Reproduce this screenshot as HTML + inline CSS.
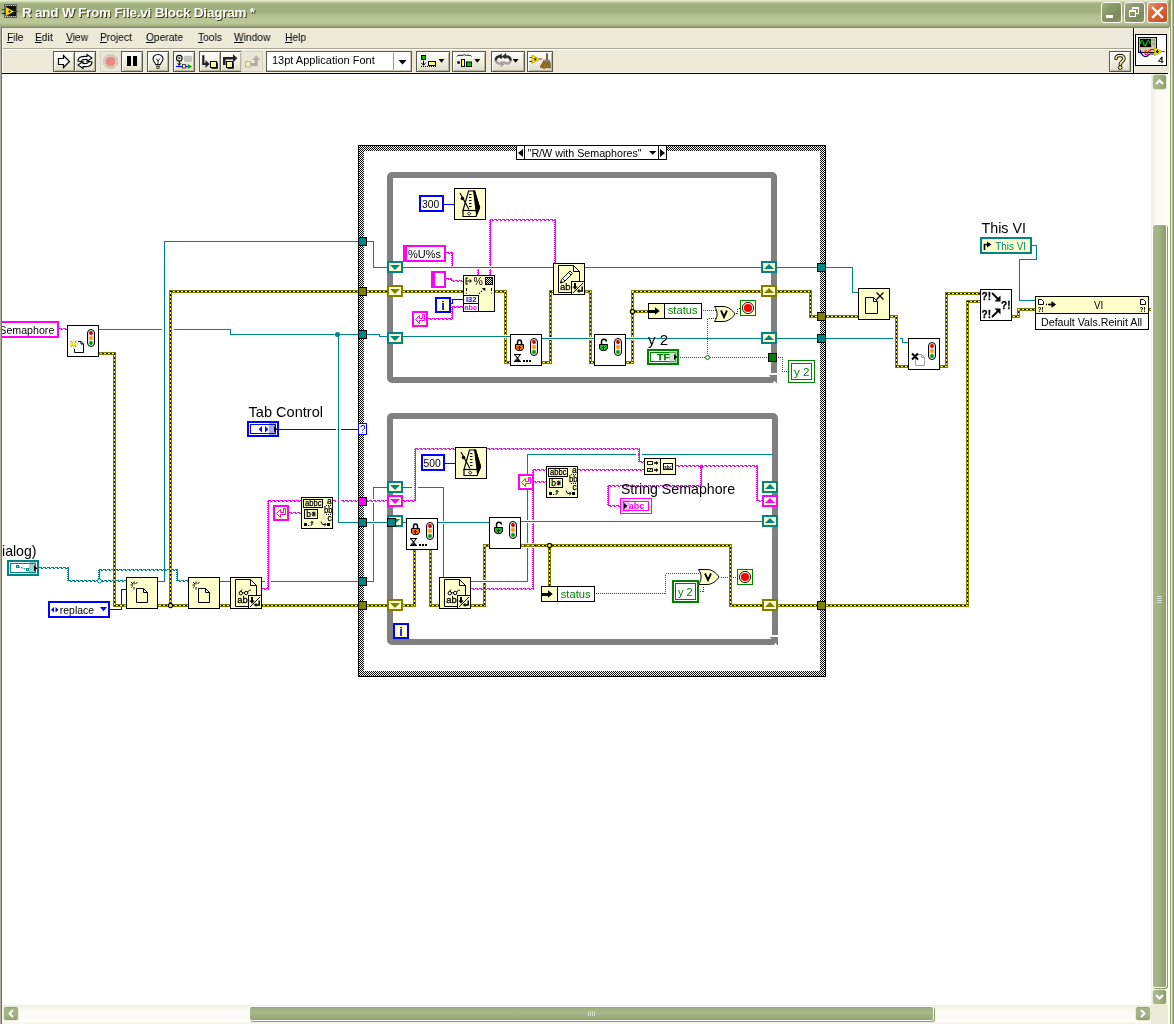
<!DOCTYPE html>
<html lang="en"><head><meta charset="utf-8"><title>R and W From File.vi Block Diagram *</title>
<style>
html,body{margin:0;padding:0;background:#fff;}
body{width:1174px;height:1024px;overflow:hidden;position:relative;font-family:"Liberation Sans",sans-serif;font-size:11px;color:#000;}
#win{position:absolute;left:0;top:0;width:1174px;height:1024px;overflow:hidden;background:#fff;}
.abs{position:absolute;}
svg{position:absolute;left:0;top:0;overflow:hidden;}
svg text{font-family:"Liberation Sans",sans-serif;}
#dg,#title .t,#menubar span,.fb span,#viicon{will-change:transform;}

#title{position:absolute;left:0;top:0;width:1170px;height:26px;
 background:linear-gradient(to bottom,#e9f0d0 0px,#d3dcb2 1.5px,#adb989 3px,#a2af7e 5px,#a2af7e 12px,#b6c292 16px,#bbc796 23px,#adb888 25px,#9ba678 26px);}
#title .t{position:absolute;left:22px;top:5px;font:bold 13.5px "Liberation Sans",sans-serif;color:#fff;
 text-shadow:1px 1px 0 #3c3d14;white-space:nowrap;letter-spacing:-0.22px;}
.cap{position:absolute;top:2px;width:19px;height:19px;border:1px solid #fff;border-radius:3px;
 background:linear-gradient(135deg,#a1ad82 0%,#8b9a6a 35%,#7c8c5c 75%,#8a996a 100%);}
#bclose{background:linear-gradient(135deg,#e59a80 0%,#dc6b44 30%,#d4592c 70%,#bf481c 100%);}
#menubar{position:absolute;left:0;top:28px;width:1170px;height:21px;background:#ece9d8;}
#menubar span{position:absolute;top:3px;font-size:11px;white-space:nowrap;transform-origin:0 0;transform:scaleX(0.93);}
#menubar u{text-decoration:underline;}
#toolbar{position:absolute;left:0;top:50px;width:1133px;height:23px;background:#ece9d8;}
.tb{position:absolute;top:51px;height:19px;border:1px solid #5a5a4c;
 background:linear-gradient(to bottom,#fffffb 0%,#f3f1e4 45%,#e0dccb 100%);box-shadow:inset 1px 1px 0 #fff,inset -1px -1px 0 #b9b5a0;}
.tbd{position:absolute;top:51px;height:19px;border:1px solid #d6d2c0;background:#e9e6d6;}
</style></head>
<body>
<div id="win">
<svg id="dg" width="1174" height="1024" viewBox="0 0 1174 1024" shape-rendering="crispEdges">
<rect x="0" y="74" width="1174" height="950" fill="#fff"/>
<defs><pattern id="chk" width="2" height="2" patternUnits="userSpaceOnUse"><rect width="2" height="2" fill="#fff"/><rect x="0" y="0" width="1" height="1" fill="#000"/><rect x="1" y="1" width="1" height="1" fill="#000"/></pattern></defs>
<path d="M358 145 H826 V677 H358 Z M364 151 V671 H820 V151 Z" fill="#000" fill-rule="evenodd"/>
<path d="M359 146 H825 V676 H359 Z M364 151 V671 H820 V151 Z" fill="url(#chk)" fill-rule="evenodd"/>
<rect x="390" y="175" width="384" height="205" rx="2" ry="2" fill="none" stroke="#808080" stroke-width="6" shape-rendering="auto"/>
<rect x="767" y="371" width="10" height="12" fill="#fff"/>
<rect x="771" y="369" width="6" height="4" fill="#808080"/>
<rect x="765" y="377" width="12" height="6" fill="#808080"/>
<path d="M769 375 H777 V378 H771 Z" fill="#808080" shape-rendering="auto"/>
<path d="M772.8 383 L774.5 380.8 L776.2 383 Z" fill="#fff" shape-rendering="auto"/>
<rect x="390" y="416" width="385" height="226" rx="2" ry="2" fill="none" stroke="#808080" stroke-width="6" shape-rendering="auto"/>
<rect x="768" y="633" width="10" height="12" fill="#fff"/>
<rect x="772" y="631" width="6" height="4" fill="#808080"/>
<rect x="766" y="639" width="12" height="6" fill="#808080"/>
<path d="M770 637 H778 V640 H772 Z" fill="#808080" shape-rendering="auto"/>
<path d="M773.8 645 L775.5 642.8 L777.2 645 Z" fill="#fff" shape-rendering="auto"/>
<rect x="516.5" y="145.5" width="150.0" height="14.0" fill="#fff" stroke="#000" stroke-width="1"/>
<rect x="516.5" y="145.5" width="8.0" height="14.0" fill="#fff" stroke="#000" stroke-width="1"/>
<rect x="658.5" y="145.5" width="8.0" height="14.0" fill="#fff" stroke="#000" stroke-width="1"/>
<path d="M523 149 V157 L518 153 Z" fill="#000" shape-rendering="auto"/>
<path d="M660 149 V157 L665 153 Z" fill="#000" shape-rendering="auto"/>
<path d="M649 151 H656.4 L652.7 154.8 Z" fill="#000" shape-rendering="auto"/>
<text x="527.6" y="156.5" font-size="11" fill="#000" textLength="114.0" lengthAdjust="spacingAndGlyphs">&quot;R/W with Semaphores&quot;</text>
<path d="M99.5 329.5 L230.5 329.5 L230.5 334.5 L358.5 334.5" fill="none" stroke="#008484" stroke-width="1" stroke-linecap="square"/>
<path d="M338.5 334.5 L338.5 522.5 L358.5 522.5" fill="none" stroke="#008484" stroke-width="1" stroke-linecap="square"/>
<circle cx="337.5" cy="334.5" r="2.5" fill="#008484" shape-rendering="auto"/>
<path d="M158.5 581.5 L164.5 581.5 L164.5 241.5 L358.5 241.5" fill="none" stroke="#008484" stroke-width="1" stroke-linecap="square"/>
<path d="M220.5 581.5 L230.5 581.5" fill="none" stroke="#008484" stroke-width="1" stroke-linecap="square"/>
<path d="M262.5 581.5 L358.5 581.5" fill="none" stroke="#008484" stroke-width="1" stroke-linecap="square"/>
<path d="M366.5 241.5 L373.5 241.5 L373.5 267.5 L553.5 267.5" fill="none" stroke="#008484" stroke-width="1" stroke-linecap="square"/>
<path d="M585.5 267.5 L852.5 267.5 L852.5 292.5 L858.5 292.5" fill="none" stroke="#008484" stroke-width="1" stroke-linecap="square"/>
<path d="M366.5 334.5 L379.5 334.5 L379.5 336.5 L510.5 336.5" fill="none" stroke="#008484" stroke-width="1" stroke-linecap="square"/>
<path d="M542.5 338.5 L902.5 338.5 L902.5 342.5 L908.5 342.5" fill="none" stroke="#008484" stroke-width="1" stroke-linecap="square"/>
<path d="M366.5 581.5 L373.5 581.5 L373.5 487.5 L443.5 487.5 L443.5 577.5" fill="none" stroke="#008484" stroke-width="1" stroke-linecap="square"/>
<path d="M366.5 522.5 L489.5 522.5" fill="none" stroke="#008484" stroke-width="1" stroke-linecap="square"/>
<path d="M521.5 521.5 L762.5 521.5" fill="none" stroke="#008484" stroke-width="1" stroke-linecap="square"/>
<path d="M471.5 581.5 L527.5 581.5 L527.5 454.5 L772.5 454.5" fill="none" stroke="#008484" stroke-width="1" stroke-linecap="square"/>
<path d="M1032.5 245.5 L1036.5 245.5 L1036.5 259.5 L1019.5 259.5 L1019.5 300.5 L1035.5 300.5" fill="none" stroke="#008484" stroke-width="1" stroke-linecap="square"/>
<path d="M279.5 429.5 L358.5 429.5" fill="none" stroke="#0000ff" stroke-width="1" stroke-linecap="square"/>
<path d="M444.5 204.5 L454.5 204.5" fill="none" stroke="#0000ff" stroke-width="1" stroke-linecap="square"/>
<path d="M451.5 303.5 L452.5 303.5 L452.5 299.5 L463.5 299.5" fill="none" stroke="#0000ff" stroke-width="1" stroke-linecap="square"/>
<path d="M445.5 463.5 L455.5 463.5" fill="none" stroke="#0000ff" stroke-width="1" stroke-linecap="square"/>
<path d="M110.5 609.5 L121.5 609.5 L121.5 589.5 L126.5 589.5" fill="none" stroke="#0000ff" stroke-width="1" stroke-linecap="square"/>
<path d="M39 567.5 H69" fill="none" stroke="#008484" stroke-width="1" stroke-dasharray="3 1"/>
<path d="M41 568.5 H69" fill="none" stroke="#008484" stroke-width="1" stroke-dasharray="2 2"/>
<path d="M68.5 567 V581" fill="none" stroke="#008484" stroke-width="1"/>
<path d="M67.5 568 V581" fill="none" stroke="#008484" stroke-width="1" stroke-dasharray="1 1"/>
<path d="M68 580.5 H127" fill="none" stroke="#008484" stroke-width="1" stroke-dasharray="3 1"/>
<path d="M70 581.5 H127" fill="none" stroke="#008484" stroke-width="1" stroke-dasharray="2 2"/>
<path d="M99.5 569 V581" fill="none" stroke="#008484" stroke-width="1"/>
<path d="M98.5 570 V581" fill="none" stroke="#008484" stroke-width="1" stroke-dasharray="1 1"/>
<path d="M99 569.5 H178" fill="none" stroke="#008484" stroke-width="1" stroke-dasharray="3 1"/>
<path d="M101 570.5 H178" fill="none" stroke="#008484" stroke-width="1" stroke-dasharray="2 2"/>
<path d="M177.5 569 V581" fill="none" stroke="#008484" stroke-width="1"/>
<path d="M176.5 570 V581" fill="none" stroke="#008484" stroke-width="1" stroke-dasharray="1 1"/>
<path d="M177 580.5 H189" fill="none" stroke="#008484" stroke-width="1" stroke-dasharray="3 1"/>
<path d="M179 581.5 H189" fill="none" stroke="#008484" stroke-width="1" stroke-dasharray="2 2"/>
<circle cx="99.5" cy="581" r="2" fill="#fff" stroke="#008484" stroke-width="1" shape-rendering="auto"/>
<path d="M59 328.5 H68" fill="none" stroke="#ff00ff" stroke-width="1" stroke-dasharray="3 1"/>
<path d="M61 329.5 H68" fill="none" stroke="#ff00ff" stroke-width="1" stroke-dasharray="2 2"/>
<path d="M262 588.5 H269" fill="none" stroke="#ff00ff" stroke-width="1" stroke-dasharray="3 1"/>
<path d="M264 589.5 H269" fill="none" stroke="#ff00ff" stroke-width="1" stroke-dasharray="2 2"/>
<path d="M268.5 500 V589" fill="none" stroke="#ff00ff" stroke-width="1"/>
<path d="M267.5 501 V589" fill="none" stroke="#ff00ff" stroke-width="1" stroke-dasharray="1 1"/>
<path d="M268 500.5 H302" fill="none" stroke="#ff00ff" stroke-width="1" stroke-dasharray="3 1"/>
<path d="M270 501.5 H302" fill="none" stroke="#ff00ff" stroke-width="1" stroke-dasharray="2 2"/>
<path d="M289 512.5 H302" fill="none" stroke="#ff00ff" stroke-width="1" stroke-dasharray="3 1"/>
<path d="M291 513.5 H302" fill="none" stroke="#ff00ff" stroke-width="1" stroke-dasharray="2 2"/>
<path d="M333 500.5 H388" fill="none" stroke="#ff00ff" stroke-width="1" stroke-dasharray="3 1"/>
<path d="M335 501.5 H388" fill="none" stroke="#ff00ff" stroke-width="1" stroke-dasharray="2 2"/>
<path d="M402 500.5 H416" fill="none" stroke="#ff00ff" stroke-width="1" stroke-dasharray="3 1"/>
<path d="M404 501.5 H416" fill="none" stroke="#ff00ff" stroke-width="1" stroke-dasharray="2 2"/>
<path d="M415.5 448 V501" fill="none" stroke="#ff00ff" stroke-width="1"/>
<path d="M414.5 449 V501" fill="none" stroke="#ff00ff" stroke-width="1" stroke-dasharray="1 1"/>
<path d="M415 448.5 H640" fill="none" stroke="#ff00ff" stroke-width="1" stroke-dasharray="3 1"/>
<path d="M417 449.5 H640" fill="none" stroke="#ff00ff" stroke-width="1" stroke-dasharray="2 2"/>
<path d="M639.5 448 V462" fill="none" stroke="#ff00ff" stroke-width="1"/>
<path d="M638.5 449 V462" fill="none" stroke="#ff00ff" stroke-width="1" stroke-dasharray="1 1"/>
<path d="M639 461.5 H645" fill="none" stroke="#ff00ff" stroke-width="1" stroke-dasharray="3 1"/>
<path d="M641 462.5 H645" fill="none" stroke="#ff00ff" stroke-width="1" stroke-dasharray="2 2"/>
<path d="M446 252.5 H453" fill="none" stroke="#ff00ff" stroke-width="1" stroke-dasharray="3 1"/>
<path d="M448 253.5 H453" fill="none" stroke="#ff00ff" stroke-width="1" stroke-dasharray="2 2"/>
<path d="M452.5 252 V266" fill="none" stroke="#ff00ff" stroke-width="1"/>
<path d="M451.5 253 V266" fill="none" stroke="#ff00ff" stroke-width="1" stroke-dasharray="1 1"/>
<path d="M446 278.5 H452" fill="none" stroke="#ff00ff" stroke-width="1" stroke-dasharray="3 1"/>
<path d="M448 279.5 H452" fill="none" stroke="#ff00ff" stroke-width="1" stroke-dasharray="2 2"/>
<path d="M451.5 278 V281" fill="none" stroke="#ff00ff" stroke-width="1"/>
<path d="M450.5 279 V281" fill="none" stroke="#ff00ff" stroke-width="1" stroke-dasharray="1 1"/>
<path d="M451 280.5 H464" fill="none" stroke="#ff00ff" stroke-width="1" stroke-dasharray="3 1"/>
<path d="M453 281.5 H464" fill="none" stroke="#ff00ff" stroke-width="1" stroke-dasharray="2 2"/>
<path d="M428 318.5 H453" fill="none" stroke="#ff00ff" stroke-width="1" stroke-dasharray="3 1"/>
<path d="M430 319.5 H453" fill="none" stroke="#ff00ff" stroke-width="1" stroke-dasharray="2 2"/>
<path d="M452.5 306 V319" fill="none" stroke="#ff00ff" stroke-width="1"/>
<path d="M451.5 307 V319" fill="none" stroke="#ff00ff" stroke-width="1" stroke-dasharray="1 1"/>
<path d="M452 306.5 H464" fill="none" stroke="#ff00ff" stroke-width="1" stroke-dasharray="3 1"/>
<path d="M454 307.5 H464" fill="none" stroke="#ff00ff" stroke-width="1" stroke-dasharray="2 2"/>
<path d="M478.5 269 V276" fill="none" stroke="#ff00ff" stroke-width="1"/>
<path d="M477.5 270 V276" fill="none" stroke="#ff00ff" stroke-width="1" stroke-dasharray="1 1"/>
<path d="M490.5 219 V276" fill="none" stroke="#ff00ff" stroke-width="1"/>
<path d="M489.5 220 V276" fill="none" stroke="#ff00ff" stroke-width="1" stroke-dasharray="1 1"/>
<path d="M490 219.5 H556" fill="none" stroke="#ff00ff" stroke-width="1" stroke-dasharray="3 1"/>
<path d="M492 220.5 H556" fill="none" stroke="#ff00ff" stroke-width="1" stroke-dasharray="2 2"/>
<path d="M555.5 219 V264" fill="none" stroke="#ff00ff" stroke-width="1"/>
<path d="M554.5 220 V264" fill="none" stroke="#ff00ff" stroke-width="1" stroke-dasharray="1 1"/>
<path d="M471 588.5 H534" fill="none" stroke="#ff00ff" stroke-width="1" stroke-dasharray="3 1"/>
<path d="M473 589.5 H534" fill="none" stroke="#ff00ff" stroke-width="1" stroke-dasharray="2 2"/>
<path d="M533.5 469 V589" fill="none" stroke="#ff00ff" stroke-width="1"/>
<path d="M532.5 470 V589" fill="none" stroke="#ff00ff" stroke-width="1" stroke-dasharray="1 1"/>
<path d="M533 469.5 H547" fill="none" stroke="#ff00ff" stroke-width="1" stroke-dasharray="3 1"/>
<path d="M535 470.5 H547" fill="none" stroke="#ff00ff" stroke-width="1" stroke-dasharray="2 2"/>
<path d="M533 481.5 H547" fill="none" stroke="#ff00ff" stroke-width="1" stroke-dasharray="3 1"/>
<path d="M535 482.5 H547" fill="none" stroke="#ff00ff" stroke-width="1" stroke-dasharray="2 2"/>
<path d="M578 469.5 H645" fill="none" stroke="#ff00ff" stroke-width="1" stroke-dasharray="3 1"/>
<path d="M580 470.5 H645" fill="none" stroke="#ff00ff" stroke-width="1" stroke-dasharray="2 2"/>
<path d="M676 465.5 H758" fill="none" stroke="#ff00ff" stroke-width="1" stroke-dasharray="3 1"/>
<path d="M678 466.5 H758" fill="none" stroke="#ff00ff" stroke-width="1" stroke-dasharray="2 2"/>
<path d="M757.5 465 V501" fill="none" stroke="#ff00ff" stroke-width="1"/>
<path d="M756.5 466 V501" fill="none" stroke="#ff00ff" stroke-width="1" stroke-dasharray="1 1"/>
<path d="M757 500.5 H763" fill="none" stroke="#ff00ff" stroke-width="1" stroke-dasharray="3 1"/>
<path d="M759 501.5 H763" fill="none" stroke="#ff00ff" stroke-width="1" stroke-dasharray="2 2"/>
<path d="M701.5 465 V486" fill="none" stroke="#ff00ff" stroke-width="1"/>
<path d="M700.5 466 V486" fill="none" stroke="#ff00ff" stroke-width="1" stroke-dasharray="1 1"/>
<path d="M608 485.5 H702" fill="none" stroke="#ff00ff" stroke-width="1" stroke-dasharray="3 1"/>
<path d="M610 486.5 H702" fill="none" stroke="#ff00ff" stroke-width="1" stroke-dasharray="2 2"/>
<path d="M608.5 485 V506" fill="none" stroke="#ff00ff" stroke-width="1"/>
<path d="M607.5 486 V506" fill="none" stroke="#ff00ff" stroke-width="1" stroke-dasharray="1 1"/>
<path d="M608 505.5 H621" fill="none" stroke="#ff00ff" stroke-width="1" stroke-dasharray="3 1"/>
<path d="M610 506.5 H621" fill="none" stroke="#ff00ff" stroke-width="1" stroke-dasharray="2 2"/>
<circle cx="701.5" cy="466.5" r="2.0" fill="#ff00ff" shape-rendering="auto"/>
<path d="M702.5 310.5 L715.5 310.5" fill="none" stroke="#008000" stroke-width="1" stroke-dasharray="1 1"/>
<path d="M735.5 313.5 L737.5 313.5 L737.5 308.5 L740.5 308.5" fill="none" stroke="#008000" stroke-width="1" stroke-dasharray="1 1"/>
<path d="M679.5 357.5 L768.5 357.5" fill="none" stroke="#008000" stroke-width="1" stroke-dasharray="1 1"/>
<path d="M707.5 357.5 L707.5 318.5 L715.5 318.5" fill="none" stroke="#008000" stroke-width="1" stroke-dasharray="1 1"/>
<circle cx="707.5" cy="357.5" r="2" fill="#fff" stroke="#008000" stroke-width="1" shape-rendering="auto"/>
<path d="M777.5 357.5 L782.5 357.5 L782.5 371.5 L788.5 371.5" fill="none" stroke="#008000" stroke-width="1" stroke-dasharray="1 1"/>
<path d="M595.5 593.5 L665.5 593.5 L665.5 573.5 L701.5 573.5" fill="none" stroke="#008000" stroke-width="1" stroke-dasharray="1 1"/>
<path d="M699.5 591.5 L703.5 591.5 L703.5 585.5" fill="none" stroke="#008000" stroke-width="1" stroke-dasharray="1 1"/>
<path d="M720.5 577.5 L737.5 577.5" fill="none" stroke="#008000" stroke-width="1" stroke-dasharray="1 1"/>
<path d="M99.5 353.5 L114.5 353.5 L114.5 605.5 L126.5 605.5" fill="none" stroke="#808000" stroke-width="3" stroke-linejoin="miter" stroke-linecap="square"/>
<path d="M99.5 353.5 L114.5 353.5 L114.5 605.5 L126.5 605.5" fill="none" stroke="#000" stroke-width="1"/>
<path d="M99.5 353.5 L114.5 353.5 L114.5 605.5 L126.5 605.5" fill="none" stroke="#ffff00" stroke-width="1" stroke-dasharray="2 2"/>
<path d="M158.5 605.5 L358.5 605.5" fill="none" stroke="#808000" stroke-width="3" stroke-linejoin="miter" stroke-linecap="square"/>
<path d="M158.5 605.5 L358.5 605.5" fill="none" stroke="#000" stroke-width="1"/>
<path d="M158.5 605.5 L358.5 605.5" fill="none" stroke="#ffff00" stroke-width="1" stroke-dasharray="2 2"/>
<path d="M170.5 605.5 L170.5 291.5 L358.5 291.5" fill="none" stroke="#808000" stroke-width="3" stroke-linejoin="miter" stroke-linecap="square"/>
<path d="M170.5 605.5 L170.5 291.5 L358.5 291.5" fill="none" stroke="#000" stroke-width="1"/>
<path d="M170.5 605.5 L170.5 291.5 L358.5 291.5" fill="none" stroke="#ffff00" stroke-width="1" stroke-dasharray="2 2"/>
<circle cx="170.5" cy="605.5" r="2.1" fill="#ffff00" stroke="#000" stroke-width="1.2" shape-rendering="auto"/>
<path d="M366.5 291.5 L463.5 291.5" fill="none" stroke="#808000" stroke-width="3" stroke-linejoin="miter" stroke-linecap="square"/>
<path d="M366.5 291.5 L463.5 291.5" fill="none" stroke="#000" stroke-width="1"/>
<path d="M366.5 291.5 L463.5 291.5" fill="none" stroke="#ffff00" stroke-width="1" stroke-dasharray="2 2"/>
<path d="M495.5 291.5 L505.5 291.5 L505.5 362.5 L510.5 362.5" fill="none" stroke="#808000" stroke-width="3" stroke-linejoin="miter" stroke-linecap="square"/>
<path d="M495.5 291.5 L505.5 291.5 L505.5 362.5 L510.5 362.5" fill="none" stroke="#000" stroke-width="1"/>
<path d="M495.5 291.5 L505.5 291.5 L505.5 362.5 L510.5 362.5" fill="none" stroke="#ffff00" stroke-width="1" stroke-dasharray="2 2"/>
<path d="M542.5 362.5 L550.5 362.5 L550.5 291.5 L553.5 291.5" fill="none" stroke="#808000" stroke-width="3" stroke-linejoin="miter" stroke-linecap="square"/>
<path d="M542.5 362.5 L550.5 362.5 L550.5 291.5 L553.5 291.5" fill="none" stroke="#000" stroke-width="1"/>
<path d="M542.5 362.5 L550.5 362.5 L550.5 291.5 L553.5 291.5" fill="none" stroke="#ffff00" stroke-width="1" stroke-dasharray="2 2"/>
<path d="M585.5 291.5 L590.5 291.5 L590.5 362.5 L594.5 362.5" fill="none" stroke="#808000" stroke-width="3" stroke-linejoin="miter" stroke-linecap="square"/>
<path d="M585.5 291.5 L590.5 291.5 L590.5 362.5 L594.5 362.5" fill="none" stroke="#000" stroke-width="1"/>
<path d="M585.5 291.5 L590.5 291.5 L590.5 362.5 L594.5 362.5" fill="none" stroke="#ffff00" stroke-width="1" stroke-dasharray="2 2"/>
<path d="M626.5 362.5 L632.5 362.5 L632.5 291.5 L810.5 291.5 L810.5 316.5 L858.5 316.5" fill="none" stroke="#808000" stroke-width="3" stroke-linejoin="miter" stroke-linecap="square"/>
<path d="M626.5 362.5 L632.5 362.5 L632.5 291.5 L810.5 291.5 L810.5 316.5 L858.5 316.5" fill="none" stroke="#000" stroke-width="1"/>
<path d="M626.5 362.5 L632.5 362.5 L632.5 291.5 L810.5 291.5 L810.5 316.5 L858.5 316.5" fill="none" stroke="#ffff00" stroke-width="1" stroke-dasharray="2 2"/>
<path d="M632.5 311.5 L648.5 311.5" fill="none" stroke="#808000" stroke-width="3" stroke-linejoin="miter" stroke-linecap="square"/>
<path d="M632.5 311.5 L648.5 311.5" fill="none" stroke="#000" stroke-width="1"/>
<path d="M632.5 311.5 L648.5 311.5" fill="none" stroke="#ffff00" stroke-width="1" stroke-dasharray="2 2"/>
<circle cx="632.5" cy="311.5" r="2.1" fill="#ffff00" stroke="#000" stroke-width="1.2" shape-rendering="auto"/>
<path d="M890.5 316.5 L896.5 316.5 L896.5 366.5 L908.5 366.5" fill="none" stroke="#808000" stroke-width="3" stroke-linejoin="miter" stroke-linecap="square"/>
<path d="M890.5 316.5 L896.5 316.5 L896.5 366.5 L908.5 366.5" fill="none" stroke="#000" stroke-width="1"/>
<path d="M890.5 316.5 L896.5 316.5 L896.5 366.5 L908.5 366.5" fill="none" stroke="#ffff00" stroke-width="1" stroke-dasharray="2 2"/>
<path d="M940.5 366.5 L946.5 366.5 L946.5 293.5 L980.5 293.5" fill="none" stroke="#808000" stroke-width="3" stroke-linejoin="miter" stroke-linecap="square"/>
<path d="M940.5 366.5 L946.5 366.5 L946.5 293.5 L980.5 293.5" fill="none" stroke="#000" stroke-width="1"/>
<path d="M940.5 366.5 L946.5 366.5 L946.5 293.5 L980.5 293.5" fill="none" stroke="#ffff00" stroke-width="1" stroke-dasharray="2 2"/>
<path d="M366.5 605.5 L414.5 605.5 L414.5 550.5" fill="none" stroke="#808000" stroke-width="3" stroke-linejoin="miter" stroke-linecap="square"/>
<path d="M366.5 605.5 L414.5 605.5 L414.5 550.5" fill="none" stroke="#000" stroke-width="1"/>
<path d="M366.5 605.5 L414.5 605.5 L414.5 550.5" fill="none" stroke="#ffff00" stroke-width="1" stroke-dasharray="2 2"/>
<path d="M430.5 550.5 L430.5 605.5 L439.5 605.5" fill="none" stroke="#808000" stroke-width="3" stroke-linejoin="miter" stroke-linecap="square"/>
<path d="M430.5 550.5 L430.5 605.5 L439.5 605.5" fill="none" stroke="#000" stroke-width="1"/>
<path d="M430.5 550.5 L430.5 605.5 L439.5 605.5" fill="none" stroke="#ffff00" stroke-width="1" stroke-dasharray="2 2"/>
<path d="M471.5 605.5 L484.5 605.5 L484.5 545.5 L489.5 545.5" fill="none" stroke="#808000" stroke-width="3" stroke-linejoin="miter" stroke-linecap="square"/>
<path d="M471.5 605.5 L484.5 605.5 L484.5 545.5 L489.5 545.5" fill="none" stroke="#000" stroke-width="1"/>
<path d="M471.5 605.5 L484.5 605.5 L484.5 545.5 L489.5 545.5" fill="none" stroke="#ffff00" stroke-width="1" stroke-dasharray="2 2"/>
<path d="M521.5 545.5 L730.5 545.5 L730.5 605.5 L967.5 605.5 L967.5 301.5 L980.5 301.5" fill="none" stroke="#808000" stroke-width="3" stroke-linejoin="miter" stroke-linecap="square"/>
<path d="M521.5 545.5 L730.5 545.5 L730.5 605.5 L967.5 605.5 L967.5 301.5 L980.5 301.5" fill="none" stroke="#000" stroke-width="1"/>
<path d="M521.5 545.5 L730.5 545.5 L730.5 605.5 L967.5 605.5 L967.5 301.5 L980.5 301.5" fill="none" stroke="#ffff00" stroke-width="1" stroke-dasharray="2 2"/>
<path d="M549.5 545.5 L549.5 587.5" fill="none" stroke="#808000" stroke-width="3" stroke-linejoin="miter" stroke-linecap="square"/>
<path d="M549.5 545.5 L549.5 587.5" fill="none" stroke="#000" stroke-width="1"/>
<path d="M549.5 545.5 L549.5 587.5" fill="none" stroke="#ffff00" stroke-width="1" stroke-dasharray="2 2"/>
<circle cx="549.5" cy="545.5" r="2.1" fill="#ffff00" stroke="#000" stroke-width="1.2" shape-rendering="auto"/>
<path d="M1012.5 316.5 L1018.5 316.5 L1018.5 309.5 L1035.5 309.5" fill="none" stroke="#808000" stroke-width="3" stroke-linejoin="miter" stroke-linecap="square"/>
<path d="M1012.5 316.5 L1018.5 316.5 L1018.5 309.5 L1035.5 309.5" fill="none" stroke="#000" stroke-width="1"/>
<path d="M1012.5 316.5 L1018.5 316.5 L1018.5 309.5 L1035.5 309.5" fill="none" stroke="#ffff00" stroke-width="1" stroke-dasharray="2 2"/>
<path d="M1149.5 309.5 L1152.5 309.5" fill="none" stroke="#808000" stroke-width="3" stroke-linejoin="miter" stroke-linecap="square"/>
<path d="M1149.5 309.5 L1152.5 309.5" fill="none" stroke="#000" stroke-width="1"/>
<path d="M1149.5 309.5 L1152.5 309.5" fill="none" stroke="#ffff00" stroke-width="1" stroke-dasharray="2 2"/>
<rect x="504" y="335" width="3" height="3" fill="#fff"/>
<rect x="504" y="336" width="3" height="1" fill="#008484"/>
<rect x="549" y="337" width="3" height="3" fill="#fff"/>
<rect x="549" y="338" width="3" height="1" fill="#008484"/>
<rect x="589" y="337" width="3" height="3" fill="#fff"/>
<rect x="589" y="338" width="3" height="1" fill="#008484"/>
<rect x="631" y="337" width="3" height="3" fill="#fff"/>
<rect x="631" y="338" width="3" height="1" fill="#008484"/>
<rect x="483" y="521" width="3" height="3" fill="#fff"/>
<rect x="483" y="522" width="3" height="1" fill="#008484"/>
<rect x="443" y="521" width="1" height="3" fill="#fff"/>
<rect x="443" y="522" width="1" height="1" fill="#008484"/>
<rect x="483" y="580" width="3" height="3" fill="#fff"/>
<rect x="483" y="581" width="3" height="1" fill="#008484"/>
<rect x="527" y="520" width="1" height="3" fill="#fff"/>
<rect x="527" y="521" width="1" height="1" fill="#008484"/>
<rect x="532" y="520" width="2" height="3" fill="#fff"/>
<rect x="532" y="521" width="2" height="1" fill="#008484"/>
<rect x="527" y="543" width="1" height="5" fill="#fff"/>
<path d="M526.5 545.5 L528.5 545.5" fill="none" stroke="#808000" stroke-width="3" stroke-linejoin="miter" stroke-linecap="square"/>
<path d="M526.5 545.5 L528.5 545.5" fill="none" stroke="#000" stroke-width="1"/>
<path d="M526.5 545.5 L528.5 545.5" fill="none" stroke="#ffff00" stroke-width="1" stroke-dasharray="2 2"/>
<rect x="532" y="543" width="2" height="5" fill="#fff"/>
<path d="M531.5 545.5 L535.5 545.5" fill="none" stroke="#808000" stroke-width="3" stroke-linejoin="miter" stroke-linecap="square"/>
<path d="M531.5 545.5 L535.5 545.5" fill="none" stroke="#000" stroke-width="1"/>
<path d="M531.5 545.5 L535.5 545.5" fill="none" stroke="#ffff00" stroke-width="1" stroke-dasharray="2 2"/>
<rect x="489" y="266" width="2" height="3" fill="#fff"/>
<rect x="489" y="267" width="2" height="1" fill="#008484"/>
<rect x="373" y="499" width="1" height="4" fill="#fff"/>
<rect x="373" y="500" width="1" height="1" fill="#ff00ff"/>
<rect x="373" y="521" width="1" height="3" fill="#fff"/>
<rect x="373" y="522" width="1" height="1" fill="#008484"/>
<rect x="412" y="487" width="6" height="1" fill="#fff"/>
<path d="M415.5 486 V489" fill="none" stroke="#ff00ff" stroke-width="1"/>
<path d="M414.5 487 V489" fill="none" stroke="#ff00ff" stroke-width="1" stroke-dasharray="1 1"/>
<rect x="636" y="454" width="6" height="1" fill="#fff"/>
<path d="M639.5 453 V456" fill="none" stroke="#ff00ff" stroke-width="1"/>
<path d="M638.5 454 V456" fill="none" stroke="#ff00ff" stroke-width="1" stroke-dasharray="1 1"/>
<rect x="893" y="338" width="2" height="1" fill="#fff"/>
<rect x="898" y="338" width="2" height="1" fill="#fff"/>
<rect x="265" y="581" width="6" height="1" fill="#fff"/>
<path d="M268.5 580 V583" fill="none" stroke="#ff00ff" stroke-width="1"/>
<path d="M267.5 581 V583" fill="none" stroke="#ff00ff" stroke-width="1" stroke-dasharray="1 1"/>
<rect x="162" y="329" width="2" height="1" fill="#fff"/>
<rect x="165" y="329" width="2" height="1" fill="#fff"/>
<rect x="167" y="329" width="2" height="1" fill="#fff"/>
<rect x="172" y="329" width="2" height="1" fill="#fff"/>
<rect x="336" y="429" width="2" height="1" fill="#fff"/>
<rect x="339" y="429" width="2" height="1" fill="#fff"/>
<rect x="336" y="500" width="2" height="2" fill="#fff"/>
<rect x="339" y="500" width="2" height="2" fill="#fff"/>
<rect x="358.5" y="237.5" width="8.0" height="8.0" fill="#008484" stroke="#000" stroke-width="1"/>
<rect x="358.5" y="287.5" width="8.0" height="8.0" fill="#808000" stroke="#000" stroke-width="1"/>
<rect x="358.5" y="330.5" width="8.0" height="8.0" fill="#008484" stroke="#000" stroke-width="1"/>
<rect x="358.5" y="497.5" width="8.0" height="8.0" fill="#ff00ff" stroke="#000" stroke-width="1"/>
<rect x="358.5" y="518.5" width="8.0" height="8.0" fill="#008484" stroke="#000" stroke-width="1"/>
<rect x="358.5" y="577.5" width="8.0" height="8.0" fill="#008484" stroke="#000" stroke-width="1"/>
<rect x="358.5" y="601.5" width="8.0" height="8.0" fill="#808000" stroke="#000" stroke-width="1"/>
<rect x="817.5" y="263.5" width="8.0" height="8.0" fill="#008484" stroke="#000" stroke-width="1"/>
<rect x="817.5" y="312.5" width="8.0" height="8.0" fill="#808000" stroke="#000" stroke-width="1"/>
<rect x="817.5" y="334.5" width="8.0" height="8.0" fill="#008484" stroke="#000" stroke-width="1"/>
<rect x="817.5" y="601.5" width="8.0" height="8.0" fill="#808000" stroke="#000" stroke-width="1"/>
<rect x="358.5" y="423.5" width="8.0" height="11.0" fill="#fff" stroke="#0000ff" stroke-width="1"/>
<text x="360.0" y="433.0" font-size="10" fill="#0000ff">?</text>
<rect x="388.0" y="262.0" width="14.0" height="10.0" fill="#ffffcc" stroke="#008484" stroke-width="2"/>
<path d="M390 265 L400 265 L395.0 270 Z" fill="#008484" shape-rendering="auto"/>
<rect x="388.0" y="286.0" width="14.0" height="10.0" fill="#ffffcc" stroke="#808000" stroke-width="2"/>
<path d="M390 289 L400 289 L395.0 294 Z" fill="#808000" shape-rendering="auto"/>
<rect x="388.0" y="333.0" width="14.0" height="10.0" fill="#ffffcc" stroke="#008484" stroke-width="2"/>
<path d="M390 336 L400 336 L395.0 341 Z" fill="#008484" shape-rendering="auto"/>
<rect x="762.0" y="262.0" width="14.0" height="10.0" fill="#ffffcc" stroke="#008484" stroke-width="2"/>
<path d="M764 269 L774 269 L769.0 264 Z" fill="#008484" shape-rendering="auto"/>
<rect x="762.0" y="286.0" width="14.0" height="10.0" fill="#ffffcc" stroke="#808000" stroke-width="2"/>
<path d="M764 293 L774 293 L769.0 288 Z" fill="#808000" shape-rendering="auto"/>
<rect x="762.0" y="333.0" width="14.0" height="10.0" fill="#ffffcc" stroke="#008484" stroke-width="2"/>
<path d="M764 340 L774 340 L769.0 335 Z" fill="#008484" shape-rendering="auto"/>
<rect x="388.0" y="482.0" width="14.0" height="10.0" fill="#ffffcc" stroke="#008484" stroke-width="2"/>
<path d="M390 485 L400 485 L395.0 490 Z" fill="#008484" shape-rendering="auto"/>
<rect x="388.0" y="496.0" width="14.0" height="10.0" fill="#ffffcc" stroke="#ff00ff" stroke-width="2"/>
<path d="M390 499 L400 499 L395.0 504 Z" fill="#ff00ff" shape-rendering="auto"/>
<rect x="388.0" y="516.0" width="14.0" height="10.0" fill="#ffffcc" stroke="#008484" stroke-width="2"/>
<path d="M390 519 L400 519 L395.0 524 Z" fill="#008484" shape-rendering="auto"/>
<rect x="387.5" y="518.5" width="8.0" height="8.0" fill="#008484" stroke="#000" stroke-width="1"/>
<rect x="388.0" y="600.0" width="14.0" height="10.0" fill="#ffffcc" stroke="#808000" stroke-width="2"/>
<path d="M390 603 L400 603 L395.0 608 Z" fill="#808000" shape-rendering="auto"/>
<rect x="763.0" y="482.0" width="14.0" height="10.0" fill="#ffffcc" stroke="#008484" stroke-width="2"/>
<path d="M765 489 L775 489 L770.0 484 Z" fill="#008484" shape-rendering="auto"/>
<rect x="763.0" y="496.0" width="14.0" height="10.0" fill="#ffffcc" stroke="#ff00ff" stroke-width="2"/>
<path d="M765 503 L775 503 L770.0 498 Z" fill="#ff00ff" shape-rendering="auto"/>
<rect x="763.0" y="516.0" width="14.0" height="10.0" fill="#ffffcc" stroke="#008484" stroke-width="2"/>
<path d="M765 523 L775 523 L770.0 518 Z" fill="#008484" shape-rendering="auto"/>
<rect x="763.0" y="600.0" width="14.0" height="10.0" fill="#ffffcc" stroke="#808000" stroke-width="2"/>
<path d="M765 607 L775 607 L770.0 602 Z" fill="#808000" shape-rendering="auto"/>
<rect x="768.5" y="353.5" width="8.0" height="8.0" fill="#007f00" stroke="#000" stroke-width="1"/>
<rect x="0" y="321" width="59" height="17" fill="#ff00ff"/>
<rect x="0" y="323" width="57" height="13" fill="#fff"/>
<text x="54.3" y="334.0" font-size="11" fill="#000" textLength="55.0" lengthAdjust="spacingAndGlyphs" text-anchor="end">Semaphore</text>
<rect x="67.5" y="325.5" width="31.0" height="31.0" fill="#fff" stroke="#000" stroke-width="1"/>
<g transform="translate(67 325)" shape-rendering="auto"><rect x="20.5" y="4.5" width="7" height="17" rx="3.5" fill="#e4e4e4" stroke="#000" stroke-width="1"/><circle cx="24.0" cy="8.0" r="1.9" fill="#d40000"/><circle cx="24.0" cy="13.0" r="1.9" fill="#ff9a00"/><circle cx="24.0" cy="18.0" r="1.9" fill="#00a000"/><path d="M11 16.5 H14 L16.5 19 V27.5 H7.5 V24" fill="none" stroke="#000" stroke-width="1"/><path d="M14 16.5 V19 H16.5" fill="none" stroke="#000" stroke-width="1"/><path d="M2 19 H11 M6.5 14.5 V23.5" stroke="#f5f000" stroke-width="1.6"/><path d="M3.5 16 L9.5 22 M9.5 16 L3.5 22" stroke="#222" stroke-width="0.9" stroke-dasharray="2.2 3.6"/></g>
<text x="248.5" y="417.0" font-size="15" fill="#000" textLength="74.5" lengthAdjust="spacingAndGlyphs">Tab Control</text>
<rect x="248.0" y="422.0" width="30.0" height="14.0" fill="#fff" stroke="#0000ff" stroke-width="2"/>
<rect x="250.5" y="424.5" width="25.0" height="9.0" fill="#fff" stroke="#0000ff" stroke-width="1"/>
<rect x="269" y="423" width="7" height="12" fill="#0000ff" fill-opacity="0.35"/>
<path d="M262 426 V432.5 L258.7 429.2 Z M265 426 V432.5 L268.3 429.2 Z" fill="#0000ff" shape-rendering="auto"/>
<path d="M274 426 V432.5 L277.3 429.2 Z" fill="#000" shape-rendering="auto"/>
<text x="2.0" y="556.0" font-size="15" fill="#000" textLength="34.5" lengthAdjust="spacingAndGlyphs">ialog)</text>
<rect x="8.0" y="561.0" width="30.0" height="14.0" fill="#fff" stroke="#008484" stroke-width="2"/>
<rect x="10.5" y="563.5" width="25.0" height="9.0" fill="#fff" stroke="#008484" stroke-width="1"/>
<rect x="29" y="562" width="7" height="12" fill="#008484" fill-opacity="0.38"/>
<path d="M18 566.5 L26.5 569.5" stroke="#008484" stroke-width="1" stroke-dasharray="2 1" shape-rendering="auto"/><rect x="16.5" y="565.5" width="2" height="2" fill="#fff" stroke="#008484"/><rect x="26.5" y="568.5" width="2" height="2" fill="#fff" stroke="#008484"/>
<path d="M34 565 V571.4 L37.3 568.2 Z" fill="#000" shape-rendering="auto"/>
<rect x="49.0" y="602.0" width="60.0" height="15.0" fill="#fff" stroke="#0000ff" stroke-width="2"/>
<path d="M54 607 V612.4 L51 609.7 Z M55.5 607 V612.4 L58.5 609.7 Z" fill="#0000ff" shape-rendering="auto"/>
<path d="M100 607 H107 L103.5 611.3 Z" fill="#0000ff" shape-rendering="auto"/>
<text x="59.8" y="613.6" font-size="11.5" fill="#000" textLength="34.3" lengthAdjust="spacingAndGlyphs">replace</text>
<rect x="126.5" y="577.5" width="31.0" height="31.0" fill="#ffffcc" stroke="#000" stroke-width="1"/>
<g transform="translate(126 577)" shape-rendering="auto"><path d="M10.5 11.5 H17.5 L21.5 15.5 V25.5 H10.5 Z" fill="none" stroke="#000" stroke-width="1"/><path d="M17.5 11.5 V15.5 H21.5" fill="none" stroke="#000" stroke-width="1"/><path d="M8 4.5 V7.5 M4.5 8 H7 M5 5 L7 7 M11.5 5 L9.5 7 M8 10 V12.5 M5.2 10.6 L6.6 9.4" stroke="#000" stroke-width="1"/></g>
<rect x="188.5" y="577.5" width="31.0" height="31.0" fill="#ffffcc" stroke="#000" stroke-width="1"/>
<g transform="translate(188 577)" shape-rendering="auto"><path d="M10.5 11.5 H17.5 L21.5 15.5 V25.5 H10.5 Z" fill="none" stroke="#000" stroke-width="1"/><path d="M17.5 11.5 V15.5 H21.5" fill="none" stroke="#000" stroke-width="1"/><path d="M8 4.5 V7.5 M4.5 8 H7 M5 5 L7 7 M11.5 5 L9.5 7 M8 10 V12.5 M5.2 10.6 L6.6 9.4" stroke="#000" stroke-width="1"/></g>
<rect x="230.5" y="577.5" width="31.0" height="31.0" fill="#ffffcc" stroke="#000" stroke-width="1"/>
<g transform="translate(230 577)" shape-rendering="auto"><path d="M5.5 2.5 H20.5 L26.5 8.5 V29.5 H5.5 Z" fill="none" stroke="#000" stroke-width="1"/><path d="M20.5 2.5 V8.5 H26.5" fill="none" stroke="#000" stroke-width="1"/><circle cx="10.8" cy="16.2" r="1.7" fill="none" stroke="#000" stroke-width="1"/><circle cx="16.2" cy="16" r="1.7" fill="none" stroke="#000" stroke-width="1"/><path d="M12.5 15.8 H14.5 M9.6 15 L12.3 12.6 M17.6 15 L19.8 12.8 L20.8 13.6" stroke="#000" stroke-width="1" fill="none"/><text x="7.3" y="25.9" font-size="9.5" fill="#000" stroke="#000" stroke-width="0.3">ab</text><rect x="18.5" y="18.5" width="13" height="13" fill="#ffffcc" stroke="#000" stroke-width="1"/><path d="M20.0 30.0 L30.0 20.0" stroke="#000" stroke-width="1"/><path d="M22.0 20.0 v4" fill="none" stroke="#000" stroke-width="2"/><path d="M19.3 23.5 h5.4 l-2.7 3.2 Z" fill="#000"/><path d="M29.2 23.6 v4.3 h-3.5" fill="none" stroke="#000" stroke-width="1.5"/><path d="M26.5 25.7 l-2.8 2.2 l2.8 2.2 Z" fill="#000"/></g>
<rect x="274.0" y="506.0" width="14.0" height="14.0" fill="#ffffcc" stroke="#ff00ff" stroke-width="2"/>
<g transform="translate(273 505)" shape-rendering="auto"><path d="M3.5 8.5 L7.5 4.5 V7.5 H10.5 V3.5 H12.5 V9.5 H7.5 V12.5 Z" fill="#ffffcc" stroke="#ff00ff" stroke-width="1" stroke-linejoin="miter"/></g>
<rect x="301.5" y="497.5" width="31.0" height="31.0" fill="#ffffcc" stroke="#000" stroke-width="1"/>
<g transform="translate(301 497)" shape-rendering="auto"><rect x="2.5" y="2.5" width="19" height="8" fill="none" stroke="#000" stroke-width="1"/><text x="4" y="9.2" font-size="8.5" fill="#000" stroke="#000" stroke-width="0.25" textLength="16.5" lengthAdjust="spacingAndGlyphs">abbc</text><rect x="3.5" y="12.5" width="13" height="9" fill="none" stroke="#000" stroke-width="1"/><text x="5.2" y="19.8" font-size="8.5" fill="#000" stroke="#000" stroke-width="0.25">b</text><path d="M10.5 17 H15 M11.2 14.8 L14.3 19.2 M14.3 14.8 L11.2 19.2 M12.75 14.5 V19.5" stroke="#000" stroke-width="1"/><text x="26" y="6.9" font-size="8.5" fill="#000" stroke="#000" stroke-width="0.25">a</text><text x="23" y="15.7" font-size="8.5" fill="#000" stroke="#000" stroke-width="0.25" textLength="8.5" lengthAdjust="spacingAndGlyphs">bb</text><text x="26.5" y="23.8" font-size="8.5" fill="#000" stroke="#000" stroke-width="0.25">c</text><path d="M25 8.5 H30 M25 17.5 H30" stroke="#000" stroke-width="1" stroke-dasharray="1 1"/><rect x="3" y="26" width="3" height="3" fill="#000"/><rect x="26" y="26" width="3" height="3" fill="#000"/><path d="M7 28.5 H8.2 M9.5 28 H11 V24.5 M9.6 26 L11 24.4 L12.4 26" stroke="#000" stroke-width="1" fill="none"/><path d="M20 24.5 L21.5 27.5 H25 M23.3 25.8 L25 27.5 L23.3 29.2" stroke="#000" stroke-width="1" fill="none"/></g>
<rect x="420.0" y="196.0" width="23.0" height="15.0" fill="#fff" stroke="#0000ff" stroke-width="2"/>
<text x="422.0" y="207.5" font-size="11" fill="#000" textLength="17.2" lengthAdjust="spacingAndGlyphs">300</text>
<rect x="454.5" y="188.5" width="31.0" height="31.0" fill="#ffffcc" stroke="#000" stroke-width="1"/>
<g transform="translate(454 188)" shape-rendering="auto"><path d="M14.5 3 H20.5 L25.5 20 L22 28.5 H9 V22.5 Z" fill="#ffffcc" stroke="#000" stroke-width="1.2"/><path d="M19 2.6 H21 L26.2 19.5 L22.2 28.5 L21.5 22.5 Z" fill="#000"/><path d="M8.5 22.5 H22" stroke="#000" stroke-width="1.2"/><path d="M15 6.5 H17.5 M15 9.5 H17.5 M15 12.5 H17.5 M15 15.5 H17.5 M15 18.5 H17.5" stroke="#000" stroke-width="1"/><path d="M6 5 L15 21.5" stroke="#000" stroke-width="1.2"/><circle cx="8.5" cy="10.5" r="1.8" fill="#000"/><rect x="14" y="24.5" width="2.4" height="2.4" fill="none" stroke="#000" stroke-width="0.8" transform="rotate(45 15.2 25.7)"/></g>
<rect x="403" y="245" width="43" height="17" fill="#ff00ff"/>
<rect x="407" y="247" width="37" height="13" fill="#fff"/>
<text x="408.0" y="258.0" font-size="11" fill="#000" textLength="33.0" lengthAdjust="spacingAndGlyphs">%U%s</text>
<rect x="431" y="271" width="15" height="17" fill="#ff00ff"/>
<rect x="435" y="273" width="9" height="13" fill="#fff"/>
<rect x="436.0" y="298.0" width="14.0" height="14.0" fill="#ffffcc" stroke="#0000ff" stroke-width="2"/>
<text x="443.0" y="310.0" font-size="13" fill="#0000ff" font-weight="bold" text-anchor="middle">i</text>
<rect x="413.0" y="312.0" width="14.0" height="14.0" fill="#ffffcc" stroke="#ff00ff" stroke-width="2"/>
<g transform="translate(412 311)" shape-rendering="auto"><path d="M3.5 8.5 L7.5 4.5 V7.5 H10.5 V3.5 H12.5 V9.5 H7.5 V12.5 Z" fill="#ffffcc" stroke="#ff00ff" stroke-width="1" stroke-linejoin="miter"/></g>
<rect x="463.5" y="275.5" width="31.0" height="36.0" fill="#ffffcc" stroke="#000" stroke-width="1"/>
<g transform="translate(463 275)" shape-rendering="auto"><rect x="0.5" y="20.5" width="15" height="8" fill="#fff" stroke="#000"/><rect x="0.5" y="28.5" width="15" height="8" fill="#fff" stroke="#000"/><text x="3" y="26.9" font-size="7" font-weight="bold" fill="#0000ff" textLength="10.5" lengthAdjust="spacingAndGlyphs">I32</text><text x="1.5" y="35" font-size="7.5" font-weight="bold" fill="#ff00ff" textLength="12.7" lengthAdjust="spacingAndGlyphs">abc</text><text x="10.5" y="10" font-size="10.5" fill="#000">%</text><path d="M3 2.5 V9.5 M3 3 H5 M3 6 H8 M3 9 H5 M6.5 4.5 L8.5 6 L6.5 7.5" fill="none" stroke="#000" stroke-width="1"/><rect x="22" y="2" width="8" height="8" fill="#000"/><path d="M23 3.5 H29 M23 5.5 H29 M23 7.5 H29" stroke="#d8d8c0" stroke-width="1" stroke-dasharray="1 1"/><path d="M24 4.5 H29 M24 6.5 H29 M24 8.5 H29" stroke="#d8d8c0" stroke-width="1" stroke-dasharray="1 1"/><path d="M3.5 13 V16 M3.5 17.5 V18.5 M28.5 13 V16 M28.5 17.5 V18.5" stroke="#000" stroke-width="1"/><path d="M16 18.8 L20.5 14.3" stroke="#000" stroke-width="1.2" stroke-dasharray="1.2 1.6"/><path d="M19 13 H22.3 V16.3 Z" fill="#000"/></g>
<rect x="553.5" y="263.5" width="31.0" height="31.0" fill="#ffffcc" stroke="#000" stroke-width="1"/>
<g transform="translate(553 263)" shape-rendering="auto"><path d="M5.5 2.5 H20.5 L26.5 8.5 V29.5 H5.5 Z" fill="none" stroke="#000" stroke-width="1"/><path d="M20.5 2.5 V8.5 H26.5" fill="none" stroke="#000" stroke-width="1"/><path d="M8.5 16.5 L17 8 L19.5 10.5 L11 19 L7.5 20 Z" fill="#fff" stroke="#000" stroke-width="0.9"/><path d="M15.5 9.5 L18 12 M9.5 15.5 L12 18" stroke="#000" stroke-width="0.9"/><path d="M7.5 20 L9 18.5" stroke="#000" stroke-width="1.4"/><text x="7" y="27" font-size="9.5" fill="#000" stroke="#000" stroke-width="0.25">ab</text><rect x="18.5" y="18.5" width="13" height="13" fill="#ffffcc" stroke="#000" stroke-width="1"/><path d="M20.0 30.0 L30.0 20.0" stroke="#000" stroke-width="1"/><path d="M22.0 20.0 v4" fill="none" stroke="#000" stroke-width="2"/><path d="M19.3 23.5 h5.4 l-2.7 3.2 Z" fill="#000"/><path d="M29.2 23.6 v4.3 h-3.5" fill="none" stroke="#000" stroke-width="1.5"/><path d="M26.5 25.7 l-2.8 2.2 l2.8 2.2 Z" fill="#000"/></g>
<rect x="510.5" y="334.5" width="31.0" height="31.0" fill="#fff" stroke="#000" stroke-width="1"/>
<g transform="translate(510 334)" shape-rendering="auto"><rect x="20.5" y="4.5" width="7" height="17" rx="3.5" fill="#e4e4e4" stroke="#000" stroke-width="1"/><circle cx="24.0" cy="8.0" r="1.9" fill="#d40000"/><circle cx="24.0" cy="13.0" r="1.9" fill="#ff9a00"/><circle cx="24.0" cy="18.0" r="1.9" fill="#00a000"/><path d="M7.5 11.0 V8.5 C7.5 5.0 11.5 5.0 11.5 8.5 V11.0" fill="none" stroke="#000" stroke-width="1.5"/><path d="M5.5 10.5 H13.5 V14.0 C13.5 17.5 5.5 17.5 5.5 14.0 Z" fill="#ff6a00" stroke="#000" stroke-width="1"/><path d="M9.5 12.5 V16.0 M8.0 14.0 L9.5 12.5 L11.0 14.0" fill="none" stroke="#000" stroke-width="1"/><path d="M4 20.5 H11 M4 27.5 H11 M4.5 20.5 L10.5 27.5 M10.5 20.5 L4.5 27.5" stroke="#000" stroke-width="1.1" fill="none"/><path d="M5.5 27 L7.5 25 L9.5 27 Z" fill="#000"/><rect x="13" y="26" width="2" height="2" fill="#000"/><rect x="16" y="26" width="2" height="2" fill="#000"/><rect x="19" y="26" width="2" height="2" fill="#000"/></g>
<rect x="594.5" y="334.5" width="31.0" height="31.0" fill="#fff" stroke="#000" stroke-width="1"/>
<g transform="translate(594 334)" shape-rendering="auto"><rect x="20.5" y="4.5" width="7" height="17" rx="3.5" fill="#e4e4e4" stroke="#000" stroke-width="1"/><circle cx="24.0" cy="8.0" r="1.9" fill="#d40000"/><circle cx="24.0" cy="13.0" r="1.9" fill="#ff9a00"/><circle cx="24.0" cy="18.0" r="1.9" fill="#00a000"/><path d="M7.5 11.0 V8.0 C7.5 4.5 12.0 4.5 12.5 7.5" fill="none" stroke="#000" stroke-width="1.5"/><path d="M5.5 10.5 H13.5 V14.0 C13.5 17.5 5.5 17.5 5.5 14.0 Z" fill="#10c020" stroke="#000" stroke-width="1"/><path d="M9.5 12.5 V16.0 M8.0 14.0 L9.5 12.5 L11.0 14.0" fill="none" stroke="#000" stroke-width="1"/></g>
<rect x="648.5" y="303.5" width="53.0" height="15.0" fill="#fff" stroke="#000" stroke-width="1"/>
<rect x="648.5" y="303.5" width="16.0" height="15.0" fill="#ffffcc" stroke="#000" stroke-width="1"/>
<path d="M649 311 H656" stroke="#000" stroke-width="3"/><path d="M655 307.3 L659.7 311 L655 314.7 Z" fill="#000" shape-rendering="auto"/>
<text x="667.8" y="314.3" font-size="11" fill="#008000" textLength="29.7" lengthAdjust="spacingAndGlyphs">status</text>
<g transform="translate(714 306)" shape-rendering="auto"><path d="M0.5 0.5 H9 C14 0.5 18.5 4 21 8 C18.5 12 14 15.5 9 15.5 H0.5 C4 10.5 4 5.5 0.5 0.5 Z" fill="#ffffcc" stroke="#000" stroke-width="1"/><path d="M7 4.5 L10 11 L13 4.5" fill="none" stroke="#000" stroke-width="1.8"/></g>
<g transform="translate(740 300)" shape-rendering="auto"><rect x="0.5" y="0.5" width="15" height="15" fill="#ffffcc" stroke="#008000" stroke-width="1"/><circle cx="8" cy="8" r="5.6" fill="#fff" stroke="#000" stroke-width="0.9"/><circle cx="8" cy="8" r="4.1" fill="#ff0000"/></g>
<text x="648.0" y="344.5" font-size="15" fill="#000" textLength="20.0" lengthAdjust="spacingAndGlyphs">y 2</text>
<g transform="translate(647 349)" shape-rendering="auto"><rect x="1" y="1" width="30" height="14" fill="#fff" stroke="#008000" stroke-width="2"/><rect x="3.5" y="3.5" width="25" height="9" fill="#fff" stroke="#008000" stroke-width="1"/><text x="10.1" y="10.9" font-size="8.5" font-weight="bold" fill="#008000" stroke="#008000" stroke-width="0.3" textLength="12.8" lengthAdjust="spacingAndGlyphs">TF</text><rect x="22" y="2" width="8" height="12" fill="#008000" fill-opacity="0.3"/><rect x="22" y="3" width="7" height="10" fill="#fff" fill-opacity="0.35"/><path d="M27 5 V11.2 L30.2 8.1 Z" fill="#000"/></g>
<rect x="788.5" y="360.5" width="26.0" height="22.0" fill="#fff" stroke="#008000" stroke-width="1"/>
<rect x="791.5" y="363.5" width="20.0" height="16.0" fill="#fff" stroke="#008000" stroke-width="1"/>
<text x="794.0" y="375.5" font-size="11" fill="#008000" textLength="15.5" lengthAdjust="spacingAndGlyphs">y 2</text>
<rect x="858.5" y="288.5" width="31.0" height="31.0" fill="#ffffcc" stroke="#000" stroke-width="1"/>
<g transform="translate(858 288)" shape-rendering="auto"><path d="M7.5 9.5 H15.5 L19.5 13.5 V25.5 H7.5 Z" fill="none" stroke="#000" stroke-width="1"/><path d="M15.5 9.5 V13.5 H19.5" fill="none" stroke="#000" stroke-width="1"/><path d="M18.5 4.5 L25.5 11.5 M25.5 4.5 L18.5 11.5" stroke="#000" stroke-width="1.3"/></g>
<rect x="908.5" y="338.5" width="31.0" height="31.0" fill="#fff" stroke="#000" stroke-width="1"/>
<g transform="translate(908 338)" shape-rendering="auto"><rect x="20.5" y="4.5" width="7" height="17" rx="3.5" fill="#e4e4e4" stroke="#000" stroke-width="1"/><circle cx="24.0" cy="8.0" r="1.9" fill="#d40000"/><circle cx="24.0" cy="13.0" r="1.9" fill="#ff9a00"/><circle cx="24.0" cy="18.0" r="1.9" fill="#00a000"/><path d="M7.5 16.5 H13.5 L16.5 19.5 V27.5 H7.5 Z" fill="none" stroke="#a0a0a0" stroke-width="1"/><path d="M13.5 16.5 V19.5 H16.5" fill="none" stroke="#a0a0a0" stroke-width="1"/><path d="M4 15.5 L10 21.5 M10 15.5 L4 21.5" stroke="#000" stroke-width="2"/></g>
<rect x="980.5" y="289.5" width="31.0" height="31.0" fill="#fff" stroke="#000" stroke-width="1"/>
<g transform="translate(980 289)" shape-rendering="auto"><text x="1.5" y="10.5" font-size="10.5" font-weight="bold" fill="#000" stroke="#000" stroke-width="0.3" textLength="9.5" lengthAdjust="spacingAndGlyphs">?!</text><text x="1.5" y="28.5" font-size="10.5" font-weight="bold" fill="#000" stroke="#000" stroke-width="0.3" textLength="9.5" lengthAdjust="spacingAndGlyphs">?!</text><text x="21" y="19.5" font-size="10.5" font-weight="bold" fill="#000" stroke="#000" stroke-width="0.3" textLength="9.5" lengthAdjust="spacingAndGlyphs">?!</text><path d="M12 4 L18.5 10.5" stroke="#000" stroke-width="1.8"/><path d="M20.5 12.5 V6.5 L14.5 12.5 Z" fill="#000"/><path d="M12 28 L18.5 21.5" stroke="#000" stroke-width="1.8"/><path d="M20.5 19.5 V25.5 L14.5 19.5 Z" fill="#000"/></g>
<text x="981.5" y="232.5" font-size="15" fill="#000" textLength="44.5" lengthAdjust="spacingAndGlyphs">This VI</text>
<rect x="981.0" y="238.0" width="50.0" height="15.0" fill="#ffffcc" stroke="#008484" stroke-width="2"/>
<path d="M984.5 250 V244.5 H988" fill="none" stroke="#000" stroke-width="1.6" shape-rendering="auto"/><path d="M987 241.5 L991.5 244.5 L987 247.5 Z" fill="#000" shape-rendering="auto"/>
<text x="995.3" y="249.5" font-size="11" fill="#008484" textLength="30.7" lengthAdjust="spacingAndGlyphs">This VI</text>
<rect x="1035.5" y="296.5" width="113.0" height="33.0" fill="#fff" stroke="#000" stroke-width="1"/>
<rect x="1035.5" y="296.5" width="113.0" height="17.0" fill="#ffffcc" stroke="#000" stroke-width="1"/>
<text x="1094.0" y="308.5" font-size="11" fill="#000" textLength="9.3" lengthAdjust="spacingAndGlyphs">VI</text>
<text x="1041.0" y="325.5" font-size="11" fill="#000" textLength="101.2" lengthAdjust="spacingAndGlyphs">Default Vals.Reinit All</text>
<g transform="translate(1035 296)" shape-rendering="auto"><path d="M3.5 3.5 H6.5 L8.5 5.5 V8.5 H3.5 Z" fill="#fff" stroke="#000" stroke-width="1"/><text x="2.5" y="15.5" font-size="6.5" font-weight="bold" fill="#000">?!</text><path d="M105.5 3.5 H108.5 L110.5 5.5 V8.5 H105.5 Z" fill="#fff" stroke="#000" stroke-width="1"/><text x="104.5" y="15.5" font-size="6.5" font-weight="bold" fill="#000">?!</text><path d="M11 8.5 H14" stroke="#000" stroke-width="1.5" stroke-dasharray="1 1"/><path d="M14 8.5 H18" stroke="#000" stroke-width="1.8"/><path d="M16.5 5 L21 8.5 L16.5 12 Z" fill="#000"/></g>
<rect x="422.0" y="455.0" width="22.0" height="15.0" fill="#fff" stroke="#0000ff" stroke-width="2"/>
<text x="423.5" y="467.0" font-size="11" fill="#000" textLength="17.2" lengthAdjust="spacingAndGlyphs">500</text>
<rect x="455.5" y="447.5" width="31.0" height="31.0" fill="#ffffcc" stroke="#000" stroke-width="1"/>
<g transform="translate(455 447)" shape-rendering="auto"><path d="M14.5 3 H20.5 L25.5 20 L22 28.5 H9 V22.5 Z" fill="#ffffcc" stroke="#000" stroke-width="1.2"/><path d="M19 2.6 H21 L26.2 19.5 L22.2 28.5 L21.5 22.5 Z" fill="#000"/><path d="M8.5 22.5 H22" stroke="#000" stroke-width="1.2"/><path d="M15 6.5 H17.5 M15 9.5 H17.5 M15 12.5 H17.5 M15 15.5 H17.5 M15 18.5 H17.5" stroke="#000" stroke-width="1"/><path d="M6 5 L15 21.5" stroke="#000" stroke-width="1.2"/><circle cx="8.5" cy="10.5" r="1.8" fill="#000"/><rect x="14" y="24.5" width="2.4" height="2.4" fill="none" stroke="#000" stroke-width="0.8" transform="rotate(45 15.2 25.7)"/></g>
<rect x="394.0" y="624.0" width="14.0" height="14.0" fill="#ffffcc" stroke="#0000ff" stroke-width="2"/>
<text x="401.0" y="636.0" font-size="13" fill="#0000ff" font-weight="bold" text-anchor="middle">i</text>
<rect x="406.5" y="518.5" width="31.0" height="31.0" fill="#fff" stroke="#000" stroke-width="1"/>
<g transform="translate(406 518)" shape-rendering="auto"><rect x="20.5" y="4.5" width="7" height="17" rx="3.5" fill="#e4e4e4" stroke="#000" stroke-width="1"/><circle cx="24.0" cy="8.0" r="1.9" fill="#d40000"/><circle cx="24.0" cy="13.0" r="1.9" fill="#ff9a00"/><circle cx="24.0" cy="18.0" r="1.9" fill="#00a000"/><path d="M7.5 11.0 V8.5 C7.5 5.0 11.5 5.0 11.5 8.5 V11.0" fill="none" stroke="#000" stroke-width="1.5"/><path d="M5.5 10.5 H13.5 V14.0 C13.5 17.5 5.5 17.5 5.5 14.0 Z" fill="#ff6a00" stroke="#000" stroke-width="1"/><path d="M9.5 12.5 V16.0 M8.0 14.0 L9.5 12.5 L11.0 14.0" fill="none" stroke="#000" stroke-width="1"/><path d="M4 20.5 H11 M4 27.5 H11 M4.5 20.5 L10.5 27.5 M10.5 20.5 L4.5 27.5" stroke="#000" stroke-width="1.1" fill="none"/><path d="M5.5 27 L7.5 25 L9.5 27 Z" fill="#000"/><rect x="13" y="26" width="2" height="2" fill="#000"/><rect x="16" y="26" width="2" height="2" fill="#000"/><rect x="19" y="26" width="2" height="2" fill="#000"/></g>
<rect x="489.5" y="517.5" width="31.0" height="31.0" fill="#fff" stroke="#000" stroke-width="1"/>
<g transform="translate(489 517)" shape-rendering="auto"><rect x="20.5" y="4.5" width="7" height="17" rx="3.5" fill="#e4e4e4" stroke="#000" stroke-width="1"/><circle cx="24.0" cy="8.0" r="1.9" fill="#d40000"/><circle cx="24.0" cy="13.0" r="1.9" fill="#ff9a00"/><circle cx="24.0" cy="18.0" r="1.9" fill="#00a000"/><path d="M7.5 11.0 V8.0 C7.5 4.5 12.0 4.5 12.5 7.5" fill="none" stroke="#000" stroke-width="1.5"/><path d="M5.5 10.5 H13.5 V14.0 C13.5 17.5 5.5 17.5 5.5 14.0 Z" fill="#10c020" stroke="#000" stroke-width="1"/><path d="M9.5 12.5 V16.0 M8.0 14.0 L9.5 12.5 L11.0 14.0" fill="none" stroke="#000" stroke-width="1"/></g>
<rect x="439.5" y="577.5" width="31.0" height="31.0" fill="#ffffcc" stroke="#000" stroke-width="1"/>
<g transform="translate(439 577)" shape-rendering="auto"><path d="M5.5 2.5 H20.5 L26.5 8.5 V29.5 H5.5 Z" fill="none" stroke="#000" stroke-width="1"/><path d="M20.5 2.5 V8.5 H26.5" fill="none" stroke="#000" stroke-width="1"/><circle cx="10.8" cy="16.2" r="1.7" fill="none" stroke="#000" stroke-width="1"/><circle cx="16.2" cy="16" r="1.7" fill="none" stroke="#000" stroke-width="1"/><path d="M12.5 15.8 H14.5 M9.6 15 L12.3 12.6 M17.6 15 L19.8 12.8 L20.8 13.6" stroke="#000" stroke-width="1" fill="none"/><text x="7.3" y="25.9" font-size="9.5" fill="#000" stroke="#000" stroke-width="0.3">ab</text><rect x="18.5" y="18.5" width="13" height="13" fill="#ffffcc" stroke="#000" stroke-width="1"/><path d="M20.0 30.0 L30.0 20.0" stroke="#000" stroke-width="1"/><path d="M22.0 20.0 v4" fill="none" stroke="#000" stroke-width="2"/><path d="M19.3 23.5 h5.4 l-2.7 3.2 Z" fill="#000"/><path d="M29.2 23.6 v4.3 h-3.5" fill="none" stroke="#000" stroke-width="1.5"/><path d="M26.5 25.7 l-2.8 2.2 l2.8 2.2 Z" fill="#000"/></g>
<rect x="519.0" y="475.0" width="14.0" height="14.0" fill="#ffffcc" stroke="#ff00ff" stroke-width="2"/>
<g transform="translate(518 474)" shape-rendering="auto"><path d="M3.5 8.5 L7.5 4.5 V7.5 H10.5 V3.5 H12.5 V9.5 H7.5 V12.5 Z" fill="#ffffcc" stroke="#ff00ff" stroke-width="1" stroke-linejoin="miter"/></g>
<rect x="546.5" y="466.5" width="31.0" height="31.0" fill="#ffffcc" stroke="#000" stroke-width="1"/>
<g transform="translate(546 466)" shape-rendering="auto"><rect x="2.5" y="2.5" width="19" height="8" fill="none" stroke="#000" stroke-width="1"/><text x="4" y="9.2" font-size="8.5" fill="#000" stroke="#000" stroke-width="0.25" textLength="16.5" lengthAdjust="spacingAndGlyphs">abbc</text><rect x="3.5" y="12.5" width="13" height="9" fill="none" stroke="#000" stroke-width="1"/><text x="5.2" y="19.8" font-size="8.5" fill="#000" stroke="#000" stroke-width="0.25">b</text><path d="M10.5 17 H15 M11.2 14.8 L14.3 19.2 M14.3 14.8 L11.2 19.2 M12.75 14.5 V19.5" stroke="#000" stroke-width="1"/><text x="26" y="6.9" font-size="8.5" fill="#000" stroke="#000" stroke-width="0.25">a</text><text x="23" y="15.7" font-size="8.5" fill="#000" stroke="#000" stroke-width="0.25" textLength="8.5" lengthAdjust="spacingAndGlyphs">bb</text><text x="26.5" y="23.8" font-size="8.5" fill="#000" stroke="#000" stroke-width="0.25">c</text><path d="M25 8.5 H30 M25 17.5 H30" stroke="#000" stroke-width="1" stroke-dasharray="1 1"/><rect x="3" y="26" width="3" height="3" fill="#000"/><rect x="26" y="26" width="3" height="3" fill="#000"/><path d="M7 28.5 H8.2 M9.5 28 H11 V24.5 M9.6 26 L11 24.4 L12.4 26" stroke="#000" stroke-width="1" fill="none"/><path d="M20 24.5 L21.5 27.5 H25 M23.3 25.8 L25 27.5 L23.3 29.2" stroke="#000" stroke-width="1" fill="none"/></g>
<g transform="translate(644 458)" shape-rendering="auto"><rect x="0.5" y="0.5" width="31" height="16" fill="#ffffcc" stroke="#000"/><path d="M16.5 0.5 V16.5" stroke="#000"/><rect x="3.5" y="3.5" width="5" height="3" fill="#fff" stroke="#000" stroke-width="0.9"/><rect x="3.5" y="10.5" width="5" height="3" fill="#fff" stroke="#000" stroke-width="0.9"/><path d="M4.5 13 L7.5 11" stroke="#000" stroke-width="0.8"/><path d="M10 5 H13 M10 12 H13" stroke="#000" stroke-width="1.4"/><path d="M12 3 L14.5 5 L12 7 Z M12 10 L14.5 12 L12 14 Z" fill="#000"/><rect x="19.5" y="5.500" width="9" height="6" fill="#fff" stroke="#000" stroke-width="1"/><text x="20.3" y="10.6" font-size="6" font-weight="bold" fill="#000" textLength="7.5" lengthAdjust="spacingAndGlyphs">abc</text></g>
<text x="620.9" y="493.5" font-size="15" fill="#000" textLength="114.3" lengthAdjust="spacingAndGlyphs">String Semaphore</text>
<g transform="translate(620 498)" shape-rendering="auto"><rect x="0.5" y="0.5" width="31" height="15" fill="#fff" stroke="#ff00ff" stroke-width="1"/><rect x="3.5" y="3.5" width="25" height="9" fill="#fff" stroke="#ff00ff" stroke-width="1"/><rect x="1" y="2" width="9" height="12" fill="#ff00ff" fill-opacity="0.32"/><path d="M4 5 V11.2 L7.3 8.1 Z" fill="#000"/><text x="8.8" y="11" font-size="8.5" font-weight="bold" fill="#ff00ff" font-family="Liberation Serif, serif" textLength="15.6" lengthAdjust="spacingAndGlyphs">abc</text></g>
<rect x="541.5" y="586.5" width="53.0" height="15.0" fill="#fff" stroke="#000" stroke-width="1"/>
<rect x="541.5" y="586.5" width="16.0" height="15.0" fill="#ffffcc" stroke="#000" stroke-width="1"/>
<path d="M542 594 H549" stroke="#000" stroke-width="3"/><path d="M548 590.3 L552.7 594 L548 597.7 Z" fill="#000" shape-rendering="auto"/>
<text x="560.8" y="597.8" font-size="11" fill="#008000" textLength="29.7" lengthAdjust="spacingAndGlyphs">status</text>
<g transform="translate(698 569)" shape-rendering="auto"><path d="M0.5 0.5 H9 C14 0.5 18.5 4 21 8 C18.5 12 14 15.5 9 15.5 H0.5 C4 10.5 4 5.5 0.5 0.5 Z" fill="#ffffcc" stroke="#000" stroke-width="1"/><path d="M7 4.5 L10 11 L13 4.5" fill="none" stroke="#000" stroke-width="1.8"/></g>
<g transform="translate(737 569)" shape-rendering="auto"><rect x="0.5" y="0.5" width="15" height="15" fill="#ffffcc" stroke="#008000" stroke-width="1"/><circle cx="8" cy="8" r="5.6" fill="#fff" stroke="#000" stroke-width="0.9"/><circle cx="8" cy="8" r="4.1" fill="#ff0000"/></g>
<rect x="673.0" y="581.0" width="25.0" height="21.0" fill="#fff" stroke="#007f00" stroke-width="2"/>
<rect x="675.5" y="583.5" width="20.0" height="16.0" fill="#fff" stroke="#007f00" stroke-width="1"/>
<text x="678.0" y="596.0" font-size="11" fill="#008000" textLength="14.8" lengthAdjust="spacingAndGlyphs">y 2</text>
</svg>
<div id="title"><span class="t">R and W From File.vi Block Diagram *</span>
<svg width="24" height="26" viewBox="0 0 24 26" shape-rendering="crispEdges"><rect x="4" y="4" width="13" height="14" fill="#636363"/><rect x="6" y="6" width="10" height="10" fill="#101010"/><g fill="#c8c8c8"><rect x="5" y="5" width="1" height="1"/><rect x="7" y="5" width="1" height="1"/><rect x="9" y="5" width="1" height="1"/><rect x="11" y="5" width="1" height="1"/><rect x="13" y="5" width="1" height="1"/><rect x="15" y="5" width="1" height="1"/><rect x="5" y="16" width="1" height="1"/><rect x="7" y="16" width="1" height="1"/><rect x="9" y="16" width="1" height="1"/><rect x="11" y="16" width="1" height="1"/><rect x="13" y="16" width="1" height="1"/><rect x="15" y="16" width="1" height="1"/></g><rect x="2" y="9" width="4" height="1" fill="#f00"/><rect x="2" y="13" width="4" height="1" fill="#00f"/><rect x="14" y="11" width="4" height="1" fill="#f00"/><path d="M6 7 L14 11.5 L6 16 Z" fill="#f5d800" shape-rendering="auto"/><rect x="8" y="11" width="3" height="1" fill="#333"/><rect x="9" y="10" width="1" height="3" fill="#333"/></svg>
</div>
<div class="cap" style="left:1101px"><svg width="19" height="19"><rect x="4" y="12" width="7" height="3" fill="#fff"/></svg></div>
<div class="cap" style="left:1124px"><svg width="19" height="19" shape-rendering="crispEdges"><path d="M7 7 V4.5 H13.5 V10 H11" fill="none" stroke="#fff" stroke-width="1"/><rect x="4.5" y="7.5" width="6" height="6" fill="none" stroke="#fff" stroke-width="1"/><rect x="4" y="7" width="7" height="2" fill="#fff"/><rect x="7" y="4" width="7" height="1.5" fill="#fff"/></svg></div>
<div class="cap" id="bclose" style="left:1147px"><svg width="19" height="19"><path d="M5 5 L14 14 M14 5 L5 14" stroke="#fff" stroke-width="2.3" stroke-linecap="square"/></svg></div>
<div class="abs" style="left:0;top:26px;width:1170px;height:1px;background:#9aa27c"></div><div class="abs" style="left:0;top:27px;width:1170px;height:1px;background:#85856f"></div>
<div id="menubar">
<span style="left:7.4px"><u>F</u>ile</span>
<span style="left:35.4px"><u>E</u>dit</span>
<span style="left:65.5px"><u>V</u>iew</span>
<span style="left:99.5px"><u>P</u>roject</span>
<span style="left:145.5px"><u>O</u>perate</span>
<span style="left:197.5px"><u>T</u>ools</span>
<span style="left:234.0px"><u>W</u>indow</span>
<span style="left:284.5px"><u>H</u>elp</span>
</div>
<div class="abs" style="left:2px;top:48px;width:1131px;height:1px;background:#aca899"></div>
<div class="abs" style="left:2px;top:49px;width:1131px;height:1px;background:#fff"></div>
<div id="toolbar"></div>
<div class="abs" style="left:2px;top:72px;width:1131px;height:1px;background:#f8f6e8"></div>
<div class="abs" style="left:1133px;top:28px;width:1px;height:45px;background:#000"></div>
<div class="abs" style="left:1134px;top:28px;width:1px;height:45px;background:#f8f7ef"></div>
<div class="abs" style="left:1135px;top:28px;width:35px;height:45px;background:#ece9d8"></div>
<div class="abs" style="left:2px;top:73px;width:1166px;height:1px;background:#000"></div>
<div class="tb" style="left:53px;width:20px"><svg width="20" height="19" viewBox="0 0 20 19"><path d="M4.5 6.5 H9.5 V3.5 L15.5 9.5 L9.5 15.5 V12.5 H4.5 Z" fill="#fff" stroke="#000" stroke-width="1.2"/></svg></div>
<div class="tb" style="left:74px;width:20px"><svg width="20" height="19" viewBox="0 0 20 19"><g fill="#fff" stroke="#000" stroke-width="1.1"><path d="M3 9 C3 5 7 4 12 4.5 V2.5 L17 6 L12 9.5 V7.5 C8 7 6.5 8 6.5 9.5 Z"/><path d="M17 10 C17 14 13 15 8 14.5 V16.5 L3 13 L8 9.5 V11.5 C12 12 13.5 11 13.5 9.5 Z"/></g></svg></div>
<div class="tbd" style="left:100px;width:20px"><svg width="20" height="19" viewBox="0 0 20 19"><path d="M6.5 3 H12.5 L16 6.5 V12.5 L12.5 16 H6.5 L3 12.5 V6.5 Z" fill="#dcd9cb" stroke="#b5b2a3" stroke-width="1"/><path d="M7.2 4.8 H11.8 L14.2 7.2 V11.8 L11.8 14.2 H7.2 L4.8 11.8 V7.2 Z" fill="#e88a86"/></svg></div>
<div class="tb" style="left:121px;width:20px"><svg width="20" height="19" viewBox="0 0 20 19"><rect x="5" y="4" width="4" height="10" fill="#000"/><rect x="11" y="4" width="4" height="10" fill="#000"/></svg></div>
<div class="tb" style="left:147px;width:20px"><svg width="20" height="19" viewBox="0 0 20 19"><path d="M10 2.5 C6.8 2.5 5 4.8 5 7 C5 9.2 7.2 10.5 7.8 12.5 H12.2 C12.8 10.5 15 9.2 15 7 C15 4.8 13.2 2.5 10 2.5 Z" fill="#fff" stroke="#000" stroke-width="1.1"/><path d="M8 6.5 L10 9 L12 6.5 M10 9 V12" fill="none" stroke="#000" stroke-width="0.9"/><rect x="8" y="13" width="4" height="1.2" fill="#e0a800"/><rect x="8" y="15" width="4" height="1.2" fill="#e0a800"/><rect x="8" y="14.2" width="4" height="0.8" fill="#222"/><rect x="8.6" y="16.2" width="2.8" height="0.8" fill="#222"/></svg></div>
<div class="tb" style="left:173px;width:20px"><svg width="20" height="19" viewBox="0 0 20 19"><rect x="10.4" y="4.2" width="7.4" height="5.2" rx="1" fill="#c3c3c3" stroke="#a9a9a9" stroke-width="0.6"/><circle cx="5.3" cy="6.2" r="2.8" fill="#fff" stroke="#000" stroke-width="1.1"/><path d="M4.5 4.8 L6.8 6.2 L4.5 7.6 Z" fill="#000"/><path d="M5.3 9 V13.5 M3.6 11.2 L5.3 13.2 L7 11.2" fill="none" stroke="#000" stroke-width="1"/><path d="M2 14.5 H14.5" stroke="#0000ff" stroke-width="1.1"/><rect x="8.4" y="12.6" width="3" height="3.4" fill="#fff" stroke="#222" stroke-width="0.9"/><path d="M13.8 12 L18 14.5 L13.8 17 Z" fill="#00a800"/></svg></div>
<div class="tb" style="left:199px;width:20px"><svg width="20" height="19" viewBox="0 0 20 19"><path d="M3.3 3.2 V12 H6" fill="none" stroke="#222" stroke-width="2.2"/><path d="M5.5 8.3 L9.8 12 L5.5 15.8 Z" fill="#222"/><rect x="10.5" y="9.5" width="6" height="6" fill="#ffff8c" stroke="#000" stroke-width="1"/><path d="M11.5 16.2 H17.2 V10.5" fill="none" stroke="#000" stroke-width="1.2"/></svg></div>
<div class="tb" style="left:220px;width:20px"><svg width="20" height="19" viewBox="0 0 20 19"><path d="M3.3 13 V6.3 H13" fill="none" stroke="#222" stroke-width="2.6"/><path d="M12 2 L16.3 6.3 L12 10.5 Z" fill="#222"/><rect x="5.5" y="9.5" width="6" height="6" fill="#ffff8c" stroke="#000" stroke-width="1"/><path d="M6.5 16.2 H12.2 V10.5" fill="none" stroke="#000" stroke-width="1.2"/></svg></div>
<div class="tbd" style="left:241px;width:20px"><svg width="20" height="19" viewBox="0 0 20 19"><rect x="3.5" y="9.5" width="5" height="5.5" fill="#efefbd" stroke="#b9b7a6" stroke-width="1"/><path d="M8.5 12.5 H14.2 V7" fill="none" stroke="#aeada0" stroke-width="3"/><path d="M10.2 8 L14.2 3.5 L18.2 8 Z" fill="#aeada0"/></svg></div>
<div class="abs fb" style="left:266px;top:51px;width:144px;height:19px;border:1px solid #5a5a4c;background:#fff;box-shadow:inset -1px -1px 0 #c9c5b2;"><span class="abs" style="left:5px;top:2px;font-size:11px;white-space:nowrap">13pt Application Font</span><div class="abs" style="left:126px;top:1px;width:1px;height:17px;background:#9b978a"></div><svg style="left:130px;top:6px" width="12" height="8"><path d="M1.5 2 H9.5 L5.5 6.5 Z" fill="#000"/></svg></div>
<div class="tb" style="left:416px;width:32px"><svg width="32" height="19" viewBox="0 0 32 19"><rect x="4.5" y="3.5" width="4" height="4" fill="#00c000" stroke="#000" stroke-width="1"/><path d="M6.5 8.5 V13 M4.3 10.8 L6.5 13.3 L8.7 10.8" stroke="#000" stroke-width="1" fill="none"/><path d="M4 14.5 H19" stroke="#000" stroke-width="1" stroke-dasharray="1 1"/><rect x="11.5" y="9.5" width="7" height="4" fill="#ffff66" stroke="#000" stroke-width="1"/><path d="M21.5 7 H27.5 L24.5 10.8 Z" fill="#000"/></svg></div>
<div class="tb" style="left:452px;width:32px"><svg width="32" height="19" viewBox="0 0 32 19"><path d="M4 4.5 Q4.5 3.3 6 3.3 H9 Q10.8 3.3 11.2 2.4 Q11.6 3.3 13.4 3.3 H16.5 Q18 3.3 18.5 4.5" fill="none" stroke="#000" stroke-width="0.9"/><rect x="4.4" y="9.2" width="2.4" height="2.6" fill="#000"/><rect x="8.5" y="7.5" width="3" height="7" fill="#ffff66" stroke="#000" stroke-width="1"/><rect x="13.5" y="10.0" width="5" height="4.5" fill="#00c000" stroke="#000" stroke-width="1"/><path d="M21.3 7 H27.3 L24.3 10.8 Z" fill="#000"/></svg></div>
<div class="tb" style="left:491px;width:32px"><svg width="32" height="19" viewBox="0 0 32 19"><path d="M3.8 8.5 A3.9 4 0 0 0 11 9.5 M11.5 9.5 A3.9 4 0 0 0 18.7 8.5" fill="none" stroke="#a2a2a2" stroke-width="2.5"/><path d="M8.5 9.5 L12.8 12 L8.8 15.5 Z" fill="#a2a2a2"/><path d="M3.8 8.5 A3.9 4 0 0 1 10.5 5.5 M11.8 6 A3.9 4 0 0 1 18.7 8.5" fill="none" stroke="#2e2e2e" stroke-width="2.5"/><path d="M9.5 1.2 L5.6 4.5 L9.8 7.2 Z" fill="#2e2e2e"/><path d="M14 1 L10.2 4.3 L14.3 7 Z" fill="#2e2e2e"/><path d="M20.6 7 H26.6 L23.6 10.8 Z" fill="#000"/></svg></div>
<div class="tb" style="left:527px;width:24px"><svg width="24" height="19" viewBox="0 0 24 19"><path d="M1.5 5.5 H5" stroke="#f00" stroke-width="1"/><path d="M1.5 9.5 H5" stroke="#00f" stroke-width="1"/><path d="M11 7 H14" stroke="#f00" stroke-width="1"/><path d="M4 3 L12 7.2 L4 11.3 Z" fill="#ffe400" stroke="#9a8a00" stroke-width="0.6"/><path d="M5.8 7.2 H8.6 M7.2 5.8 V8.6" stroke="#222" stroke-width="1"/><path d="M19 1.3 V8.5" stroke="#7a4a1c" stroke-width="1.8"/><path d="M15.5 8 H21.5 L22 10 H15 Z" fill="#9a9a9a" stroke="#666" stroke-width="0.5"/><path d="M15 10 H22 L22.5 16 L19 15.5 L16 16.5 L12 15 Z" fill="#a4782c" stroke="#6b4a12" stroke-width="0.7"/><path d="M16.5 11 L14.5 15 M18.5 11 L17.8 15.5 M20.5 11 L20.5 15.5" stroke="#5e4a10" stroke-width="0.7"/></svg></div>
<div class="tb" style="left:1109px;width:20px"><svg width="20" height="19" viewBox="0 0 20 19"><path d="M6 6.5 C6 2.5 14 2.5 14 6.5 C14 9 10.5 9.5 10.3 12.3" fill="none" stroke="#000" stroke-width="3.4" stroke-linecap="round"/><path d="M6 6.5 C6 2.5 14 2.5 14 6.5 C14 9 10.5 9.5 10.3 12.3" fill="none" stroke="#fbf29a" stroke-width="1.7" stroke-linecap="round"/><circle cx="10.2" cy="15.6" r="1.9" fill="#fbf29a" stroke="#000" stroke-width="0.9"/></svg></div>
<svg id="viicon" style="left:1135px;top:34px" width="32" height="32" viewBox="0 0 32 32"><rect x="0.5" y="0.5" width="31" height="31" fill="#fff" stroke="#000" stroke-width="1"/><rect x="3.5" y="3.5" width="18" height="15" fill="#cfcfa4" stroke="#000" stroke-width="1"/><rect x="4.5" y="4.5" width="12" height="9" fill="#000" stroke="#b4b4b4" stroke-width="1"/><path d="M5.2 10 C6 5.5 7.6 5.5 8.4 9 C9.2 12.5 10.8 12.5 11.6 9 C12.4 5.5 14 5.5 15.4 10" fill="none" stroke="#00c800" stroke-width="1.2"/><ellipse cx="18.7" cy="9.8" rx="1" ry="1.5" fill="#f5c9a0" stroke="#555" stroke-width="0.5"/><path d="M17.8 5 V7 M19.6 5 V7" stroke="#666" stroke-width="0.7"/><path d="M5.5 16 V18.5 L8 21.5 L9.5 22.5 H12 L14.5 20 H19" fill="none" stroke="#0000a0" stroke-width="1.2"/><path d="M11.5 16 L10 18 V20 L11 21 L12.5 20 L13.5 17.5 L15 16.5 L16 15.5 H19.5" fill="none" stroke="#ff0000" stroke-width="1.1"/><path d="M27 17.5 H29.8" stroke="#f00" stroke-width="1"/><path d="M19.3 13.8 L27.5 17.6 L19.3 21.6 Z" fill="#ffee00" stroke="#a89a00" stroke-width="0.8"/><path d="M20.8 17.6 H23.8 M22.3 16.1 V19.1" stroke="#000" stroke-width="1.1"/><text x="23.2" y="28.7" font-size="9.5" fill="#000" stroke="#000" stroke-width="0.3">4</text></svg>
<div class="abs" style="left:0;top:26px;width:1px;height:998px;background:#b1ae9d"></div>
<div class="abs" style="left:1px;top:27px;width:1px;height:997px;background:#716f60"></div>
<div class="abs" style="left:2px;top:28px;width:1px;height:45px;background:#fbfaf3"></div>
<div class="abs" style="left:1168px;top:28px;width:1px;height:45px;background:#ece9d8"></div><div class="abs" style="left:1168px;top:73px;width:1px;height:951px;background:#fff"></div><div class="abs" style="left:1169px;top:27px;width:1px;height:997px;background:#fff"></div>
<div class="abs" style="left:1170px;top:0;width:1px;height:1024px;background:#919d6f"></div>
<div class="abs" style="left:1171px;top:0;width:1px;height:1024px;background:#eff1d8"></div>
<div class="abs" style="left:1172px;top:0;width:1px;height:1024px;background:#b4be92"></div>
<div class="abs" style="left:1173px;top:0;width:1px;height:1024px;background:#86925f"></div>
<div class="abs" style="left:1167px;top:0;width:3px;height:26px;background:linear-gradient(to right,rgba(120,130,90,0),#8e9b6c)"></div>
<div class="abs" style="left:1151px;top:74px;width:17px;height:932px;background:linear-gradient(to right,#f0efe6,#fbfaf5 40%,#fdfdfa)"></div>
<div class="abs" style="left:1153px;top:75px;width:13px;height:14px;border-radius:2px;background:linear-gradient(to right,#a9b888 0%,#a3b282 45%,#93a371 85%,#8a9a69 100%);box-shadow:0 0 0 1px #e6ead6;"><svg width="13" height="14"><path d="M3 9 L6.5 5.5 L10 9" fill="none" stroke="#fff" stroke-width="2"/></svg></div>
<div class="abs" style="left:1153px;top:225px;width:13px;height:762px;border-radius:2px;background:linear-gradient(to right,#a9b888 0%,#a3b282 45%,#93a371 85%,#8a9a69 100%);box-shadow:0 0 0 1px #fff,1px 1px 0 1px #8a986a;"></div>
<div class="abs" style="left:1157px;top:596px;width:5px;height:1px;background:#d5dcc0;box-shadow:0 2px 0 #d5dcc0,0 4px 0 #d5dcc0,0 6px 0 #d5dcc0"></div>
<div class="abs" style="left:1153px;top:990px;width:13px;height:14px;border-radius:2px;background:linear-gradient(to right,#a9b888 0%,#a3b282 45%,#93a371 85%,#8a9a69 100%);box-shadow:0 0 0 1px #e6ead6;"><svg width="13" height="14"><path d="M3 5 L6.5 8.5 L10 5" fill="none" stroke="#fff" stroke-width="2"/></svg></div>
<div class="abs" style="left:2px;top:1005px;width:1149px;height:17px;background:linear-gradient(to bottom,#f0efe6,#fbfaf5 40%,#fdfdfa)"></div>
<div class="abs" style="left:1151px;top:1005px;width:17px;height:19px;background:#ece9d8"></div>
<div class="abs" style="left:2px;top:1022px;width:1149px;height:2px;background:#f6f5ee"></div>
<div class="abs" style="left:4px;top:1007px;width:14px;height:13px;border-radius:2px;background:linear-gradient(to bottom,#90a16f 0%,#a3b385 14%,#a6b689 50%,#99a977 85%,#8e9f6b 100%);box-shadow:0 0 0 1px #e6ead6;"><svg width="14" height="13"><path d="M9 3 L5.5 6.5 L9 10" fill="none" stroke="#fff" stroke-width="2"/></svg></div>
<div class="abs" style="left:250px;top:1007px;width:683px;height:13px;border-radius:2px;background:linear-gradient(to bottom,#90a16f 0%,#a3b385 14%,#a6b689 50%,#99a977 85%,#8e9f6b 100%);box-shadow:0 0 0 1px #fff,1px 1px 0 1px #8a986a;"></div>
<div class="abs" style="left:588px;top:1011px;width:1px;height:5px;background:#d5dcc0;box-shadow:2px 0 0 #d5dcc0,4px 0 0 #d5dcc0,6px 0 0 #d5dcc0"></div>
<div class="abs" style="left:1136px;top:1007px;width:14px;height:13px;border-radius:2px;background:linear-gradient(to bottom,#90a16f 0%,#a3b385 14%,#a6b689 50%,#99a977 85%,#8e9f6b 100%);box-shadow:0 0 0 1px #e6ead6;"><svg width="14" height="13"><path d="M5 3 L8.5 6.5 L5 10" fill="none" stroke="#fff" stroke-width="2"/></svg></div>
</div>
</body></html>
